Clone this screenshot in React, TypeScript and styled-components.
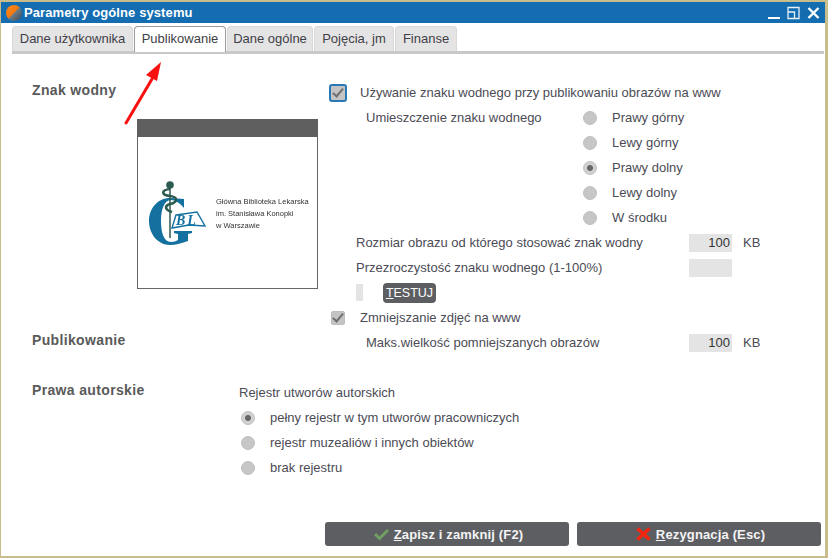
import React from "react";
import styled, { createGlobalStyle } from "styled-components";

const tabs = [
  { label: "Dane użytkownika", width: 121 },
  { label: "Publikowanie", width: 92 },
  { label: "Dane ogólne", width: 86 },
  { label: "Pojęcia, jm", width: 80 },
  { label: "Finanse", width: 62 },
];
const placements = ["Prawy górny", "Lewy górny", "Prawy dolny", "Lewy dolny", "W środku"];
const registers = [
  "pełny rejestr w tym utworów pracowniczych",
  "rejestr muzealiów i innych obiektów",
  "brak rejestru",
];

function Logo() {
  return (
    <LogoSvg viewBox="149 180 58 66" width="58" height="66">
      <path
        fill="#14719f"
        d="M184 199 L184 208 C180 203 175 200 171 200 C164 200 161 210 161 221 C161 233 164 242 171 242 C174 242 176 241 178 240 L178 234 L174 233 L174 231 L192 231 L192 233 L188 234 L188 241 C182 243 176 245 170 245 C158 245 149 234 149 221 C149 208 158 198 170 198 C175 198 179 199 184 199 Z"
      />
      <circle cx="170" cy="185" r="3.800" fill="#2c5a50" />
      <path stroke="#2c5a50" strokeWidth="1.500" fill="none" d="M170 187 L170 238" />
      <path
        stroke="#2c5a50"
        strokeWidth="2.600"
        fill="none"
        d="M170 189 C161 190 161 195 170 196 C178 197 178 202 170 204 C164 206 165 210 172 212"
      />
      <path fill="#fff" stroke="#14719f" strokeWidth="1.400" d="M176 215 L197 212 L205 226 L189 225 L172 228 Z" />
      <BookText x="176" y="225">BL</BookText>
    </LogoSvg>
  );
}

function ArrowMark() {
  return (
    <Arrow viewBox="0 0 60 80" width="60" height="80">
      <path d="M6 69 L32 25" stroke="#f91010" strokeWidth="3" strokeLinecap="round" fill="none" />
      <path d="M41 8 L37 27 L26 21 Z" fill="#f91010" />
    </Arrow>
  );
}

export default function App() {
  return (
    <Window>
      <GlobalStyle />
      <TitleBar>
        <AppIcon />
        <Title>Parametry ogólne systemu</Title>
        <WindowControls>
          <svg width="12" height="14" viewBox="0 0 12 14">
            <rect x="0" y="11" width="12" height="2" fill="#fff" />
          </svg>
          <svg width="13" height="14" viewBox="0 0 13 14">
            <path d="M1 1.500h11v11H1z M1 6h6.500v6.500" stroke="#e6f0f7" strokeWidth="1.300" fill="none" />
          </svg>
          <svg width="13" height="14" viewBox="0 0 13 14">
            <path d="M1.500 2 L11.500 12 M11.500 2 L1.500 12" stroke="#fff" strokeWidth="2.400" fill="none" />
          </svg>
        </WindowControls>
      </TitleBar>

      <TabStrip>
        {tabs.map((tab, i) => (
          <Tab key={tab.label} $width={tab.width} $active={i === 1}>{tab.label}</Tab>
        ))}
      </TabStrip>
      <ArrowMark />

      <Body>
        <Section>
          <SectionTitle $width={105}>Znak wodny</SectionTitle>
          <PreviewColumn>
            <Preview>
              <PreviewHead />
              <PreviewBody>
                <Logo />
                <LogoCaption>
                  <span>Główna Biblioteka Lekarska</span>
                  <span>im. Stanisława Konopki</span>
                  <span>w Warszawie</span>
                </LogoCaption>
              </PreviewBody>
            </Preview>
          </PreviewColumn>
          <Options>
            <Line>
              <CheckBox $focused>
                <CheckMark />
              </CheckBox>
              <CheckLabel $gap={13}>Używanie znaku wodnego przy publikowaniu obrazów na www</CheckLabel>
            </Line>
            <PlacementRow>
              <PlacementLabel>Umieszczenie znaku wodnego</PlacementLabel>
              <div>
                {placements.map((p, i) => (
                  <RadioLine key={p}>
                    <Radio $checked={i === 2} />
                    <span>{p}</span>
                  </RadioLine>
                ))}
              </div>
            </PlacementRow>
            <Line $indent={26}>
              <span>Rozmiar obrazu od którego stosować znak wodny</span>
              <ValueBox>100</ValueBox>
              <Unit>KB</Unit>
            </Line>
            <Line $indent={26}>
              <span>Przezroczystość znaku wodnego (1-100%)</span>
              <ValueBox />
              <Unit />
            </Line>
            <Line $indent={26}>
              <SmallBox />
              <TestButton><u>T</u>ESTUJ</TestButton>
            </Line>
          </Options>
        </Section>

        <Section>
          <SectionTitle $width={298} $offset={25}>Publikowanie</SectionTitle>
          <Options>
            <Line>
              <CheckBox>
                <CheckMark />
              </CheckBox>
              <CheckLabel $gap={15}>Zmniejszanie zdjęć na www</CheckLabel>
            </Line>
            <Line $indent={36}>
              <span>Maks.wielkość pomniejszanych obrazów</span>
              <ValueBox>100</ValueBox>
              <Unit>KB</Unit>
            </Line>
          </Options>
        </Section>

        <Section $top={25}>
          <SectionTitle $width={207}>Prawa autorskie</SectionTitle>
          <div>
            <Line>Rejestr utworów autorskich</Line>
            {registers.map((r, i) => (
              <RegisterLine key={r}>
                <Radio $checked={i === 0} />
                <span>{r}</span>
              </RegisterLine>
            ))}
          </div>
        </Section>
      </Body>

      <Footer>
        <ActionButton>
          <svg width="15" height="12" viewBox="0 0 15 12">
            <path d="M1 6 L5.500 10.500 L14 2" stroke="#6f9f62" strokeWidth="3" fill="none" />
          </svg>
          <span><u>Z</u>apisz i zamknij (F2)</span>
        </ActionButton>
        <ActionButton>
          <svg width="15" height="14" viewBox="0 0 15 14">
            <path d="M1.500 1.500 L13.500 12.500 M13.500 1.500 L1.500 12.500" stroke="#f5260f" strokeWidth="3.600" fill="none" />
          </svg>
          <span><u>R</u>ezygnacja (Esc)</span>
        </ActionButton>
      </Footer>
    </Window>
  );
}

const GlobalStyle = createGlobalStyle`
  html, body {
    margin: 0;
    background: #fff;
  }
  body {
    font-family: "Liberation Sans", Arial, sans-serif;
    font-size: 13px;
    color: #4b4b55;
  }
`;

const Window = styled.div`
  position: relative;
  box-sizing: border-box;
  display: flex;
  flex-direction: column;
  width: 828px;
  height: 558px;
  background: #fff;
  border: solid #c9bd8d;
  border-width: 2px 3px 2px 1px;
`;

const TitleBar = styled.div`
  display: flex;
  align-items: center;
  flex: none;
  height: 21px;
  padding: 0 5px 0 5px;
  background: #136db0;
`;

const AppIcon = styled.div`
  width: 16px;
  height: 16px;
  border-radius: 50%;
  background: linear-gradient(135deg, #ff8a1c 0%, #f2780f 48%, #6d7b86 52%, #3d4a55 100%);
`;

const Title = styled.div`
  margin-left: 2px;
  font-size: 13px;
  font-weight: bold;
  letter-spacing: 0.1px;
  color: #fff;
`;

const WindowControls = styled.div`
  display: flex;
  align-items: center;
  gap: 7px;
  margin-left: auto;
`;

const TabStrip = styled.div`
  display: flex;
  flex: none;
  gap: 1px;
  height: 25px;
  margin: 3px 1px 0 11px;
  border-bottom: 3px solid #c8c8c8;
`;

const Tab = styled.div<{ $active?: boolean; $width: number }>`
  box-sizing: border-box;
  width: ${(p) => p.$width}px;
  height: ${(p) => (p.$active ? "26px" : "25px")};
  padding-top: 4px;
  text-align: center;
  white-space: nowrap;
  color: #3f3f48;
  border: 1px solid ${(p) => (p.$active ? "#9a9a9a" : "#d8d8d8")};
  border-bottom: none;
  border-radius: 4px 4px 0 0;
  background: ${(p) => (p.$active ? "#fff" : "#e4e4e4")};
  z-index: ${(p) => (p.$active ? 1 : 0)};
`;

const Arrow = styled.svg`
  position: absolute;
  left: 119px;
  top: 52px;
`;

const Body = styled.div`
  display: flex;
  flex-direction: column;
  padding: 26px 0 0 31px;
`;

const Section = styled.div<{ $top?: number }>`
  display: flex;
  margin-top: ${(p) => p.$top ?? 0}px;
`;

const SectionTitle = styled.div<{ $width: number; $offset?: number }>`
  flex: none;
  box-sizing: border-box;
  width: ${(p) => p.$width}px;
  margin-top: ${(p) => p.$offset ?? 0}px;
  height: 20px;
  line-height: 20px;
  font-size: 14px;
  font-weight: bold;
  letter-spacing: 0.35px;
  color: #5a5a5a;
`;

const PreviewColumn = styled.div`
  flex: none;
  width: 193px;
  padding-top: 39px;
`;

const Preview = styled.div`
  box-sizing: border-box;
  display: flex;
  flex-direction: column;
  width: 181px;
  height: 170px;
  border: 1px solid #666;
  border-top: none;
`;

const PreviewHead = styled.div`
  height: 18px;
  margin: 0 -1px;
  background: #5f5f5f;
`;

const PreviewBody = styled.div`
  display: flex;
  align-items: flex-start;
  padding: 43px 0 0 11px;
  filter: blur(0.35px);
`;

const LogoSvg = styled.svg`
  flex: none;
`;

const BookText = styled.text`
  font-family: "Liberation Serif", serif;
  font-size: 14px;
  font-weight: bold;
  font-style: italic;
  letter-spacing: 2px;
  fill: #14719f;
`;

const LogoCaption = styled.div`
  display: flex;
  flex-direction: column;
  gap: 3px;
  margin: 17px 0 0 9px;
  font-size: 7.500px;
  line-height: 9px;
  color: #333;
  white-space: nowrap;
`;

const Options = styled.div`
  flex: none;
  width: 433px;
`;

const Line = styled.div<{ $indent?: number }>`
  display: flex;
  align-items: center;
  height: 25px;
  padding-left: ${(p) => p.$indent ?? 0}px;
  white-space: nowrap;
`;

const CheckBox = styled.div<{ $focused?: boolean }>`
  flex: none;
  box-sizing: border-box;
  display: flex;
  align-items: center;
  justify-content: center;
  width: 14px;
  height: 14px;
  margin: 0 0 0 1px;
  border-radius: 2px;
  background: #c4c4c4;
  border: 1px solid #bdbdbd;
  ${(p) => p.$focused && "width: 18px; height: 18px; margin-left: -1px; border: 2px solid #2a79b5; border-radius: 3px;"}
`;

const CheckMark = styled.div`
  width: 4px;
  height: 9px;
  margin-top: -2px;
  border: solid #707070;
  border-width: 0 2px 2px 0;
  transform: rotate(40deg);
`;

const CheckLabel = styled.span<{ $gap: number }>`
  margin-left: ${(p) => p.$gap}px;
`;

const PlacementRow = styled.div`
  display: flex;
  padding-left: 36px;
`;

const PlacementLabel = styled.div`
  flex: none;
  width: 217px;
  line-height: 25px;
`;

const RadioLine = styled.div`
  display: flex;
  align-items: center;
  gap: 15px;
  height: 25px;
`;

const RegisterLine = styled(RadioLine)`
  padding-left: 2px;
`;

const Radio = styled.div<{ $checked?: boolean }>`
  flex: none;
  box-sizing: border-box;
  width: 14px;
  height: 14px;
  border-radius: 50%;
  background: ${(p) =>
    p.$checked ? "radial-gradient(circle, #666 0 2.500px, #d0d0d0 3.500px)" : "#c6c6c6"};
  border: 1px solid #c0c0c0;
`;

const ValueBox = styled.div`
  box-sizing: border-box;
  flex: none;
  width: 43px;
  height: 18px;
  margin-left: auto;
  padding-right: 2px;
  line-height: 18px;
  text-align: right;
  color: #333;
  background: #e4e4e4;
`;

const Unit = styled.span`
  flex: none;
  width: 20px;
  margin-left: 11px;
`;

const SmallBox = styled.div`
  width: 7px;
  height: 17px;
  background: #e4e4e4;
`;

const TestButton = styled.button`
  box-sizing: border-box;
  width: 53px;
  height: 20px;
  margin-left: 20px;
  padding: 0;
  border: none;
  border-radius: 4px;
  font-family: inherit;
  font-size: 12.500px;
  color: #fff;
  background: #5c5e62;
`;

const Footer = styled.div`
  display: flex;
  justify-content: flex-end;
  gap: 8px;
  margin-top: auto;
  padding: 0 4px 10px 0;
`;

const ActionButton = styled.button`
  display: flex;
  align-items: center;
  justify-content: center;
  gap: 5px;
  width: 244px;
  height: 24px;
  padding: 0 0 0 3px;
  border: none;
  border-radius: 3px;
  font-family: inherit;
  font-size: 13px;
  font-weight: bold;
  letter-spacing: 0.15px;
  color: #f4f4f4;
  background: #5c5e62;
`;
